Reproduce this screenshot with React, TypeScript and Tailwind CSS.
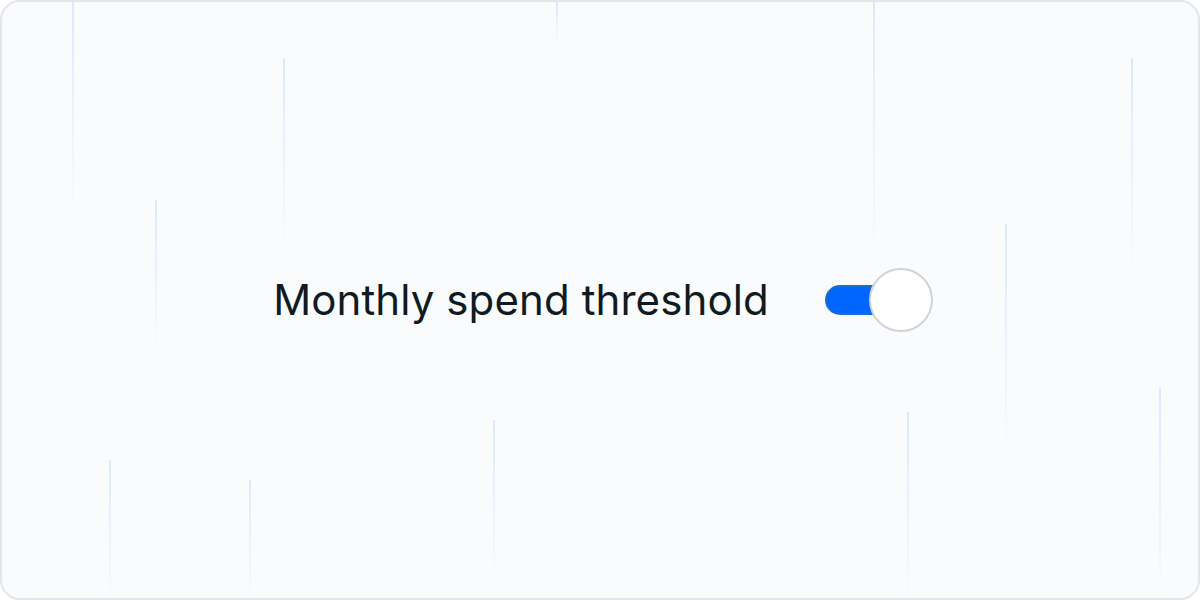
import { useState } from 'react';

// garis dekoratif tipis di latar belakang kartu (posisi relatif ke dalam border)
const streaks = [
  'left-[70px] top-0 h-[210px]',
  'left-[281px] top-[56px] h-[190px]',
  'left-[153px] top-[198px] h-[150px]',
  'left-[554px] top-0 h-[40px]',
  'left-[871px] top-0 h-[260px]',
  'left-[1129px] top-[56px] h-[215px]',
  'left-[1003px] top-[222px] h-[230px]',
  'left-[107px] top-[458px] h-[140px]',
  'left-[247px] top-[478px] h-[120px]',
  'left-[491px] top-[418px] h-[160px]',
  'left-[905px] top-[410px] h-[188px]',
  'left-[1157px] top-[386px] h-[212px]',
];

export default function App() {
  const [enabled, setEnabled] = useState(true);

  return (
    <div className="h-[600px] w-[1200px] bg-white">
      <div className="relative flex h-full w-full items-center justify-center overflow-hidden rounded-[20px] border-2 border-[#e3e6ea] bg-[#f9fbfd] font-['Inter',sans-serif]">
        {streaks.map((s) => (
          <div key={s} className={`pointer-events-none absolute w-[2px] bg-linear-to-b from-[#dde9fa] to-transparent ${s}`} />
        ))}

        <div className="relative flex items-center gap-[56px] pl-[6px]">
          <span className="text-[42px] font-normal leading-none tracking-[0.1px] text-[#111a21]">Monthly spend threshold</span>

          <button
            type="button"
            onClick={() => setEnabled(!enabled)}
            className="relative h-[64px] w-[108px]"
          >
            <span className={`absolute left-0 top-[17px] h-[30px] w-[88px] rounded-full border-2 ${enabled ? 'border-[#1a6fc8] bg-[#0066ff]' : 'border-[#cfd4da] bg-[#e5e7eb]'}`} />
            <span className={`absolute top-0 h-[64px] w-[64px] rounded-full border-2 border-[#d0d4d9] bg-white ${enabled ? 'left-[44px]' : 'left-0'}`} />
          </button>
        </div>
      </div>
    </div>
  );
}
